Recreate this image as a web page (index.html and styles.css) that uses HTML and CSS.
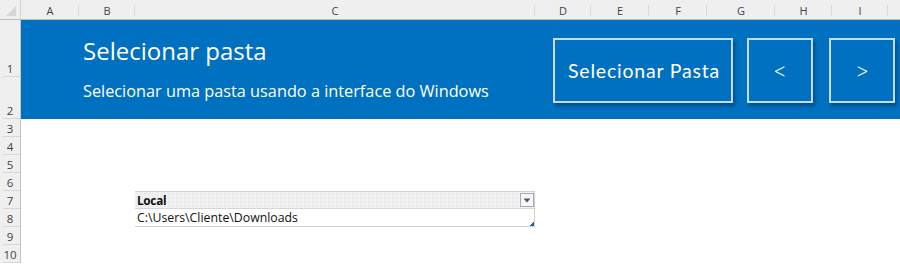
FILE: index.html
```html
<!DOCTYPE html>
<html lang="pt">
<head>
<meta charset="utf-8">
<title>Selecionar pasta</title>
<link rel="stylesheet" href="styles.css">
</head>
<body>
<div class="sheet">
  <div class="corner"><svg width="12" height="12" viewBox="0 0 12 12"><polygon points="11,1 11,11 1,11" fill="#d6d6d6"/></svg></div>
  <div class="colh">A</div>
  <div class="colh">B</div>
  <div class="colh">C</div>
  <div class="colh">D</div>
  <div class="colh">E</div>
  <div class="colh">F</div>
  <div class="colh">G</div>
  <div class="colh">H</div>
  <div class="colh">I</div>
  <div class="colh last"></div>

  <div class="rowh r1">1</div>
  <div class="rowh r2">2</div>
  <div class="rowh">3</div>
  <div class="rowh">4</div>
  <div class="rowh">5</div>
  <div class="rowh">6</div>
  <div class="rowh">7</div>
  <div class="rowh">8</div>
  <div class="rowh">9</div>
  <div class="rowh">10</div>

  <div class="band">
    <div class="band-text">
      <div class="title">Selecionar pasta</div>
      <div class="subtitle">Selecionar uma pasta usando a interface do Windows</div>
    </div>
    <div class="btn btn-wide">Selecionar Pasta</div>
    <div class="btn btn-sq btn-prev">&lt;</div>
    <div class="btn btn-sq btn-next">&gt;</div>
  </div>

  <div class="table">
    <div class="thead">
      <span class="th">Local</span>
      <span class="dd"><svg width="8" height="5" viewBox="0 0 8 5"><polygon points="0.5,0.5 7.5,0.5 4,4.5" fill="#555"/></svg></span>
    </div>
    <div class="tcell">C:\Users\Cliente\Downloads<span class="handle"></span></div>
  </div>
</div>
</body>
</html>
```

FILE: styles.css
```css
html, body {
  margin: 0;
  padding: 0;
  background: #ffffff;
}
.sheet {
  display: grid;
  grid-template-columns: 21px 58px 56px 400px 56px 58px 58px 68px 57px 56px 12px;
  grid-template-rows: 20px 57px 42px repeat(8, 18px);
  width: 900px;
  height: 265px;
  overflow: hidden;
  font-family: "Open Sans", "Noto Sans", sans-serif;
}
.corner {
  grid-column: 1;
  grid-row: 1;
  background: #efefef;
  border-right: 1px solid #d4d4d4;
  border-bottom: 1px solid #bcbcbc;
  display: flex;
  align-items: flex-end;
  justify-content: flex-end;
  padding: 0 3px 2px 0;
  box-sizing: border-box;
}
.colh {
  grid-row: 1;
  background: #efefef;
  border-bottom: 1px solid #bcbcbc;
  font-size: 11px;
  color: #444;
  display: flex;
  align-items: center;
  justify-content: center;
  box-sizing: border-box;
  position: relative;
  padding-top: 1px;
}
.colh::after {
  content: "";
  position: absolute;
  right: 0;
  top: 5px;
  bottom: 3px;
  width: 1px;
  background: #dadada;
}
.colh.last::after { display: none; }
.rowh {
  grid-column: 1;
  background: #efefef;
  border-right: 1px solid #c6c6c6;
  font-size: 11.5px;
  color: #444;
  display: flex;
  align-items: flex-end;
  justify-content: center;
  box-sizing: border-box;
  position: relative;
  line-height: 16px;
}
.rowh::after {
  content: "";
  position: absolute;
  left: 3px;
  right: 0;
  bottom: 0;
  height: 1px;
  background: #d8d8d8;
}
.band {
  grid-column: 2 / -1;
  grid-row: 2 / 4;
  background: #0070c0;
  display: flex;
  align-items: flex-start;
  padding-top: 18px;
  box-sizing: border-box;
}
.band-text {
  flex: 1;
  padding-left: 62px;
  color: #ffffff;
}
.title {
  font-size: 24px;
  line-height: 30px;
  margin-top: -2px;
}
.subtitle {
  font-size: 16.3px;
  line-height: 22px;
  margin-top: 14px;
}
.btn {
  height: 65px;
  box-sizing: border-box;
  border: 2px solid #c9dbea;
  box-shadow: 2px 3px 3px rgba(0, 40, 80, 0.45);
  color: #ffffff;
  font-family: "Lato", "Liberation Sans", sans-serif;
  display: flex;
  align-items: center;
  justify-content: center;
}
.btn-wide {
  width: 180px;
  font-size: 19.5px;
  letter-spacing: 0.8px;
  padding-left: 2px;
}
.btn-sq {
  width: 66px;
  font-size: 25px;
  font-weight: 300;
  padding-bottom: 2px;
}
.btn-prev { margin-left: 14px; }
.btn-next { margin-left: 16px; margin-right: 5px; }
.table {
  grid-column: 4;
  grid-row: 8 / 10;
  display: flex;
  flex-direction: column;
  font-family: "Open Sans", "Noto Sans", sans-serif;
  font-size: 12.3px;
  color: #111;
}
.thead {
  height: 18px;
  box-sizing: border-box;
  background-color: #f1f1f1;
  background-image: radial-gradient(circle, #e2e2e2 0.6px, transparent 0.8px);
  background-size: 4px 4px;
  border-top: 1px solid #d0d0d0;
  border-bottom: 1px solid #d6d6d6;
  border-right: 1px solid #d0d0d0;
  display: flex;
  align-items: center;
  padding-left: 2px;
}
.th {
  flex: 1;
  font-weight: 700;
  font-size: 11.8px;
  letter-spacing: -0.3px;
  line-height: 16px;
}
.dd {
  width: 14px;
  height: 14px;
  box-sizing: border-box;
  border: 1px solid #a8a8bc;
  background: #f8f8f8;
  display: flex;
  align-items: center;
  justify-content: center;
}
.tcell {
  height: 18px;
  box-sizing: border-box;
  border-bottom: 1px solid #d0d0d0;
  border-right: 1px solid #d0d0d0;
  padding-left: 2px;
  line-height: 17px;
  position: relative;
}
.handle {
  position: absolute;
  right: 0;
  bottom: 0;
  width: 4px;
  height: 4px;
  background: linear-gradient(135deg, transparent 50%, #1f5fb0 50%);
}
```
